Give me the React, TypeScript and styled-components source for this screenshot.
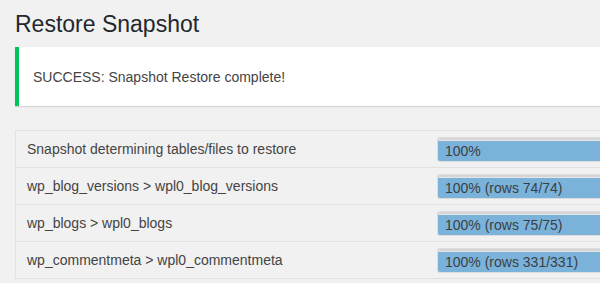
import React from 'react';
import styled, { createGlobalStyle } from 'styled-components';

const GlobalStyle = createGlobalStyle`
  html, body {
    margin: 0;
    padding: 0;
    background: #f1f1f1;
    overflow: hidden;
  }
  body {
    font-family: "Liberation Sans", Arial, sans-serif;
    color: #444;
  }
`;

const Wrap = styled.div`
  padding: 10px 0 0 15px;
  width: 600px;
`;

const Title = styled.h1`
  margin: 0;
  font-size: 23px;
  font-weight: 400;
  line-height: 29px;
  color: #23282d;
`;

const Notice = styled.div`
  margin-top: 8px;
  height: 59px;
  display: flex;
  align-items: center;
  padding: 0 14px;
  background: #fff;
  border-left: 4px solid #00c457;
  box-shadow: 0 1px 1px rgba(0, 0, 0, 0.12);
  font-size: 14px;
  line-height: 20px;
  color: #444;
`;

const Table = styled.div`
  margin-top: 24px;
  border: 1px solid #e1e1e1;
  border-bottom: none;
  border-right: none;
`;

const Row = styled.div`
  display: grid;
  grid-template-columns: 421px 1fr;
  align-items: center;
  height: 36px;
  border-bottom: 1px solid #e1e1e1;
  font-size: 14px;
`;

const Label = styled.div`
  padding-left: 11px;
  white-space: nowrap;
`;

const Bar = styled.div`
  height: 23px;
  border: 1px solid #dcdcdc;
  border-right: none;
  border-radius: 3px 0 0 3px;
  background: #e6e6e6;
  box-shadow: inset 0 2px 0 #d6d6d6;
  overflow: hidden;
  display: flex;
  align-items: flex-end;
`;

const Fill = styled.div<{ $pct: number }>`
  width: ${p => p.$pct}%;
  height: 20px;
  background: #7ab2da;
  padding-left: 7px;
  box-sizing: border-box;
  font-size: 14px;
  line-height: 20px;
  color: #3b3f44;
  white-space: nowrap;
`;

const steps = [
  { name: 'Snapshot determining tables/files to restore', info: '100%' },
  { name: 'wp_blog_versions > wpl0_blog_versions', info: '100% (rows 74/74)' },
  { name: 'wp_blogs > wpl0_blogs', info: '100% (rows 75/75)' },
  { name: 'wp_commentmeta > wpl0_commentmeta', info: '100% (rows 331/331)' },
];

const App: React.FC = () => {
  return (
    <Wrap>
      <GlobalStyle />
      <Title>Restore Snapshot</Title>
      <Notice>SUCCESS: Snapshot Restore complete!</Notice>
      <Table>
        {steps.map(s => (
          <Row key={s.name}>
            <Label>{s.name}</Label>
            <Bar>
              <Fill $pct={100}>{s.info}</Fill>
            </Bar>
          </Row>
        ))}
      </Table>
    </Wrap>
  );
};

export default App;
